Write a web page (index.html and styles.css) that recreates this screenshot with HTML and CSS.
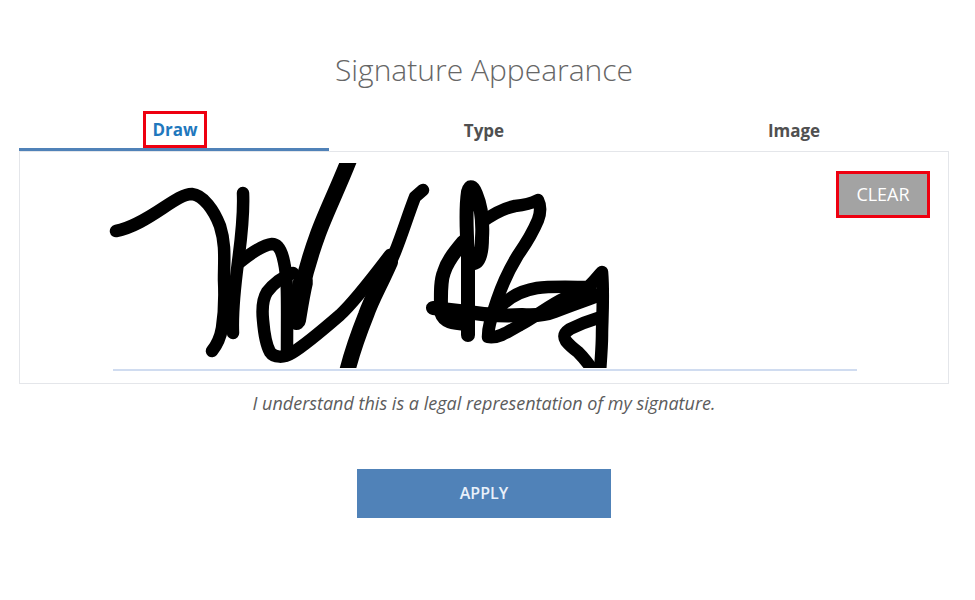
FILE: index.html
```html
<!DOCTYPE html>
<html lang="en">
<head>
    <meta charset="UTF-8">
    <title>Signature Appearance</title>
    <link rel="stylesheet" href="styles.css">
</head>
<body>
    <div class="container">
        <h1 class="title">Signature Appearance</h1>

        <div class="tabs">
            <div class="tab active"><span class="marked">Draw</span></div>
            <div class="tab">Type</div>
            <div class="tab">Image</div>
        </div>

        <div class="pad">
            <svg class="ink" viewBox="0 0 928 229" width="928" height="229">
                <defs>
                    <clipPath id="ink-clip">
                        <rect x="20" y="163" width="900" height="205"/>
                    </clipPath>
                </defs>
                <g transform="translate(-20 -152)">
                    <path class="sign-line" d="M113 370H857"/>
                    <g class="strokes" clip-path="url(#ink-clip)">
                        <path d="M116 231C132 228 148 218 163 208C175 200 184 194 192 194C203 195 214 210 220 226C226 245 224 260 224 280C225 300 224 315 222 328C220 340 216 346 212 351"/>
                        <path d="M243 193C244 215 241 240 238 262C235 285 232 310 233 333"/>
                        <path d="M240 262C250 254 262 245 272 244C279 244 282 252 284 262C288 280 287 300 287 355"/>
                        <path d="M293 273C283 276 273 284 267 292C262 300 262 310 263 320C264 332 266 345 270 352C274 358 284 358 292 353C305 345 325 328 340 315C352 304 368 284 390 255"/>
                        <path class="thick" d="M349 160C338 188 326 212 318 234C310 256 304 278 301 292"/>
                        <path class="heavy" d="M303 282C300 295 298 308 296 320"/>
                        <path d="M423 190L415 197C408 215 402 235 395 252C387 272 380 282 372 298"/>
                        <path class="thick" d="M390 262C380 285 372 298 366 315C358 335 352 352 347 372"/>
                        <path class="wide" d="M468 335C468 295 468 275 468 255C466 225 466 205 468 192C470 185 473 186 476 194C481 206 483 222 482 238C482 252 480 262 474 263C470 263 468 258 468 250"/>
                        <path class="wide" d="M463 242C453 254 447 262 444 272C440 282 441 296 441 312C444 322 452 323 468 324"/>
                        <path class="wide" d="M433 308L468 312C485 315 505 316 522 315C535 316 545 315 555 311C570 305 585 300 598 295"/>
                        <path d="M482 222C496 212 505 208 515 206C525 205 532 203 538 200C541 206 541 212 538 220C533 232 525 245 518 255C510 268 502 285 497 300C492 315 488 326 488 337C497 339 508 332 520 325C535 317 550 305 565 298L590 288"/>
                        <path d="M502 305C512 295 525 290 537 288C550 286 575 287 588 287C594 282 598 276 602 272C604 296 602 322 602 335C602 345 601 358 600 372"/>
                        <path d="M598 318C588 321 578 325 570 329C564 333 563 336 566 341C570 346 574 349 578 352C586 360 590 366 594 372"/>
                    </g>
                </g>
            </svg>
            <button class="clear-btn">CLEAR</button>
        </div>

        <p class="note">I understand this is a legal representation of my signature.</p>

        <div class="actions">
            <button class="apply-btn">APPLY</button>
        </div>
    </div>
</body>
</html>
```

FILE: styles.css
```css
body {
    margin: 0;
    padding: 0;
    font-family: "Open Sans", "Noto Sans", sans-serif;
    background-color: #fff;
    color: #555;
}

.container {
    width: 930px;
    margin-left: 19px;
    padding-top: 49px;
}

.title {
    margin: 0;
    font-size: 30px;
    line-height: 42px;
    font-weight: 300;
    text-align: center;
    color: #666;
}

.tabs {
    display: flex;
    height: 60px;
}

.tab {
    flex: 1;
    display: flex;
    align-items: center;
    justify-content: center;
    padding-top: 19px;
    box-sizing: border-box;
    font-size: 17px;
    font-weight: 700;
    color: #505050;
}

.tab.active {
    padding-top: 20px;
    color: #1f78bd;
    border-bottom: 3px solid #5082b8;
}

.marked {
    box-sizing: border-box;
    width: 64px;
    height: 37px;
    margin-left: 2px;
    display: flex;
    align-items: center;
    justify-content: center;
    border: 3px solid #ee0010;
}

.pad {
    position: relative;
    height: 231px;
    border: 1px solid #e4e6ea;
}

.ink {
    display: block;
}

.sign-line {
    stroke: #d0dcf0;
    stroke-width: 2;
    fill: none;
}

.strokes {
    fill: none;
    stroke: #000;
    stroke-width: 12.5;
    stroke-linecap: round;
    stroke-linejoin: round;
}

.strokes .thick {
    stroke-width: 16;
}

.strokes .heavy {
    stroke-width: 20;
}

.strokes .wide {
    stroke-width: 14;
}

.clear-btn {
    position: absolute;
    top: 19px;
    right: 18px;
    width: 94px;
    height: 47px;
    border: 3px solid #ee0010;
    background: #a3a3a3;
    color: #fff;
    font-family: inherit;
    font-size: 18px;
    padding: 0 0 2px;
}

.note {
    margin: 8px 0 0;
    text-align: center;
    font-size: 18px;
    line-height: 22px;
    font-style: italic;
    color: #5c5c5c;
}

.actions {
    display: flex;
    justify-content: center;
    margin-top: 55px;
}

.apply-btn {
    width: 254px;
    height: 49px;
    border: none;
    background: #5082b8;
    color: #e8f0fa;
    font-family: inherit;
    font-size: 16px;
    font-weight: 600;
    padding: 0 0 2px;
}
```
